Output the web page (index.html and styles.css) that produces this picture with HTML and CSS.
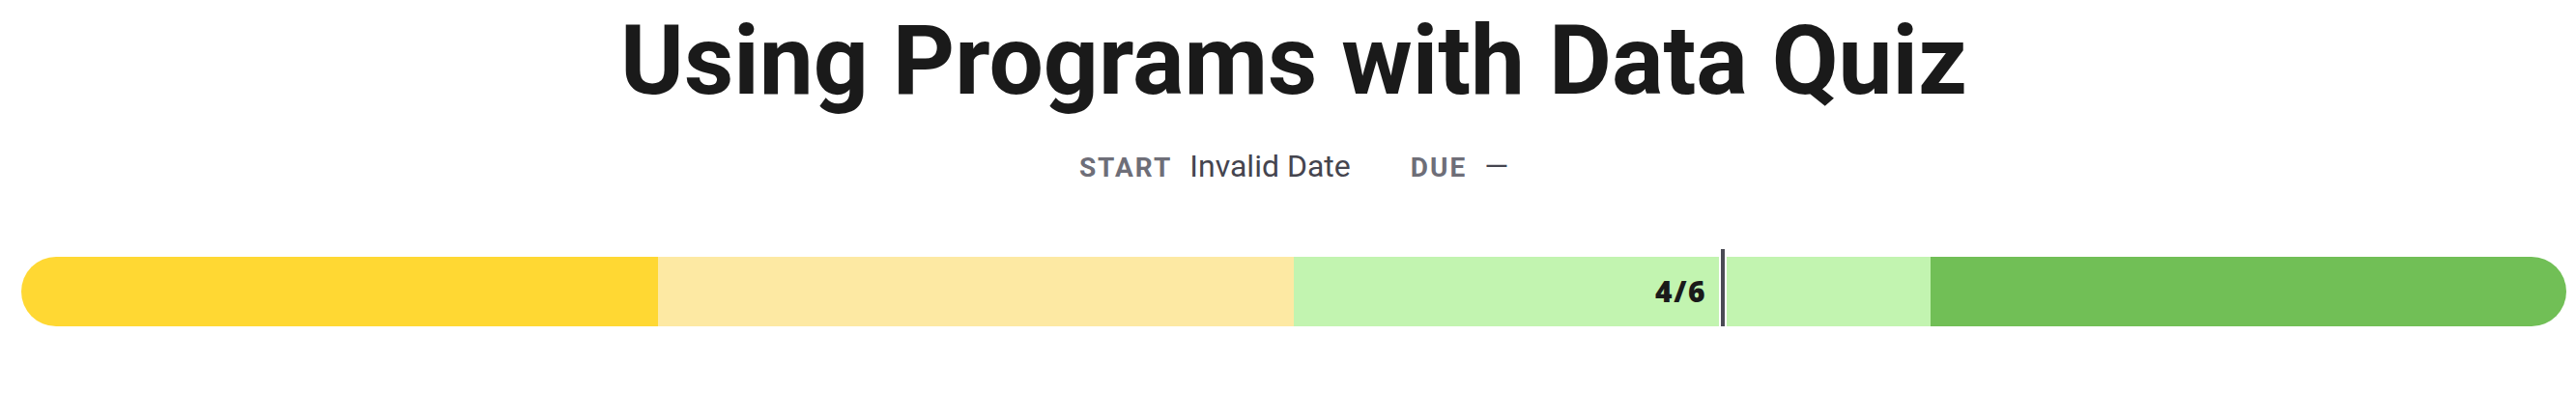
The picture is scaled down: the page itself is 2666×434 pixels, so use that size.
FILE: index.html
```html
<!DOCTYPE html>
<html lang="en">
<head>
<meta charset="utf-8">
<title>Using Programs with Data Quiz</title>
<link rel="stylesheet" href="styles.css">
</head>
<body>
<main class="page">
  <h1 class="title">Using Programs with Data Quiz</h1>
  <div class="dates">
    <div class="date-item">
      <span class="date-label">Start</span>
      <span class="date-value">Invalid Date</span>
    </div>
    <div class="date-item">
      <span class="date-label">Due</span>
      <span class="date-value">—</span>
    </div>
  </div>
  <div class="progress">
    <div class="seg seg-1"></div>
    <div class="seg seg-2"></div>
    <div class="seg seg-3"></div>
    <div class="seg seg-4"></div>
    <div class="marker" style="left: 66.667%;">
      <span class="marker-label">4/6</span>
    </div>
  </div>
</main>
</body>
</html>
```

FILE: styles.css
```css
html, body {
  margin: 0;
  padding: 0;
  background: #ffffff;
}

body {
  font-family: Roboto, "Noto Sans", "Liberation Sans", sans-serif;
  color: #1a1a1a;
}

.page {
  padding: 13px 10px 0 22px;
}

.title {
  margin: 0;
  font-size: 100px;
  line-height: 1;
  font-weight: 700;
  text-align: center;
  color: #1a1a1a;
}

.dates {
  margin-top: 43px;
  display: flex;
  justify-content: center;
  gap: 62px;
}

.date-item {
  display: flex;
  align-items: baseline;
  gap: 18px;
}

.date-label {
  font-size: 28px;
  line-height: 28px;
  font-weight: 700;
  text-transform: uppercase;
  letter-spacing: 2px;
  color: #6e6e78;
}

.date-value {
  font-size: 32px;
  line-height: 32px;
  color: #45454f;
}

.progress {
  position: relative;
  margin-top: 78px;
  height: 72px;
  display: flex;
  border-radius: 36px;
}

.seg {
  flex: 1 1 0;
}

.seg-1 {
  background: #ffd833;
  border-radius: 36px 0 0 36px;
}

.seg-2 {
  background: #fde9a3;
}

.seg-3 {
  background: #c2f4b0;
}

.seg-4 {
  background: #71bf56;
  border-radius: 0 36px 36px 0;
}

.marker {
  position: absolute;
  top: -8px;
  bottom: -8px;
  width: 4px;
  margin-left: 1px;
  background: #4b4b55;
  border-left: 2px solid #ffffff;
  border-right: 2px solid #ffffff;
  box-sizing: content-box;
}

.marker-label {
  position: absolute;
  right: calc(100% + 15px);
  top: 50%;
  transform: translateY(-50%);
  font-family: "Open Sans", "Noto Sans", sans-serif;
  font-size: 30px;
  font-weight: 800;
  line-height: 1;
  letter-spacing: 1.5px;
  color: #1a1a1a;
  white-space: nowrap;
}
```
